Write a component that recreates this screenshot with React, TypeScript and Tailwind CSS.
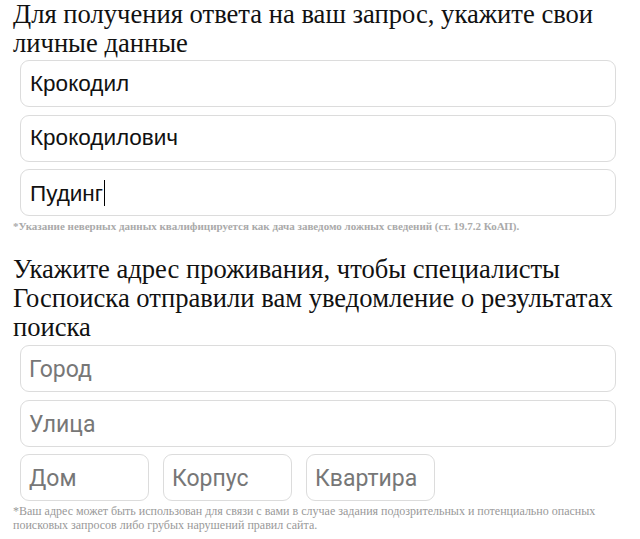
const serif = { fontFamily: '"Liberation Serif", "Times New Roman", serif' };

function Field({ value, placeholder, caret, className = '' }: { value?: string; placeholder?: string; caret?: boolean; className?: string }) {
  return (
    <div className={`flex h-[47px] items-center rounded-[9px] border border-[#dcdcdc] bg-white px-[9px] ${className}`}>
      {value ? (
        <span className="font-['Liberation_Sans',Arial,sans-serif] text-[22.5px] text-[#111]">
          {value}
          {caret && <span className="ml-[1px] inline-block h-[26px] w-px translate-y-[5px] bg-black align-baseline" />}
        </span>
      ) : (
        <span className="-ml-[1px] translate-y-[2px] font-['Roboto',Arial,sans-serif] text-[23px] text-[#777]">{placeholder}</span>
      )}
    </div>
  );
}

export default function App() {
  return (
    <div className="min-h-[539px] w-[640px] bg-white pl-[13px] pr-[17px]">
      <h1 className="text-[26.6px] leading-[29px] text-[#111]" style={serif}>
        Для получения ответа на ваш запрос, укажите свои личные данные
      </h1>
      <div className="mx-[7px] mt-[2px] flex flex-col gap-[7.5px]">
        <Field value="Крокодил" />
        <Field value="Крокодилович" />
        <Field value="Пудинг" caret />
      </div>
      <p className="mt-[3px] text-[11px] font-bold leading-[14px] text-[#aaa]" style={serif}>
        *Указание неверных данных квалифицируется как дача заведомо ложных сведений (ст. 19.7.2 КоАП).
      </p>
      <h2 className="mt-[22px] text-[26.6px] leading-[29px] text-[#111]" style={serif}>
        Укажите адрес проживания, чтобы специалисты Госпоиска отправили вам уведомление о результатах поиска
      </h2>
      <div className="mx-[7px] mt-[3px] flex flex-col gap-[7.5px]">
        <Field placeholder="Город" />
        <Field placeholder="Улица" />
        <div className="flex gap-[14px]">
          <Field placeholder="Дом" className="w-[129px]" />
          <Field placeholder="Корпус" className="w-[129px]" />
          <Field placeholder="Квартира" className="w-[129px]" />
        </div>
      </div>
      <p className="mt-[3px] text-[12px] leading-[14px] text-[#999]" style={serif}>
        *Ваш адрес может быть использован для связи с вами в случае задания подозрительных и потенциально опасных поисковых запросов либо грубых нарушений правил сайта.
      </p>
    </div>
  );
}
